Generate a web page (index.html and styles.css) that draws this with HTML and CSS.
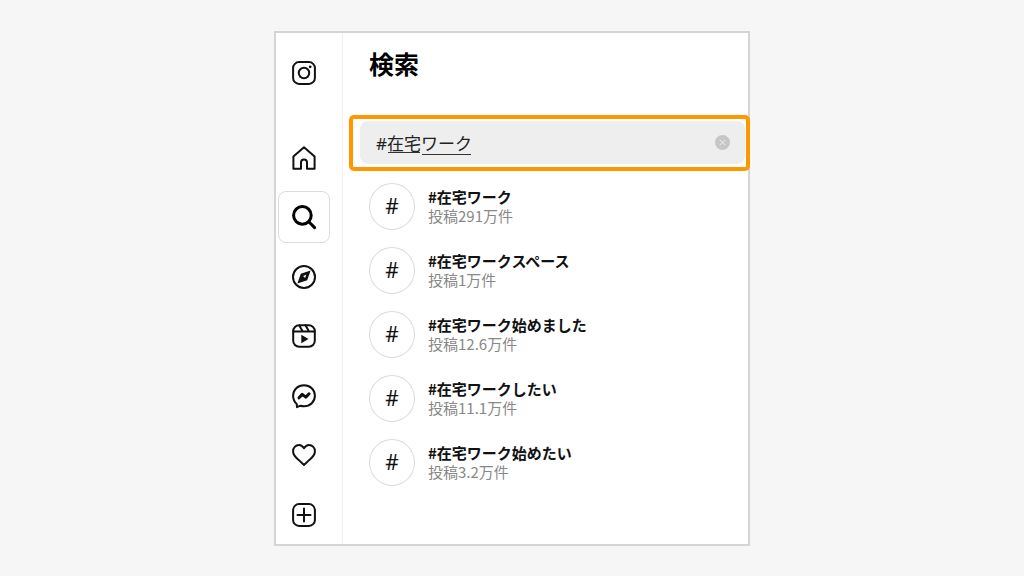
FILE: index.html
```
<!DOCTYPE html>
<html lang="ja">
<head>
    <meta charset="UTF-8">
    <meta name="viewport" content="width=device-width, initial-scale=1.0">
    <title>検索</title>
    <link rel="stylesheet" href="styles.css">
</head>
<body>
    <div class="panel">
        <aside class="sidebar">
            <a href="#" class="nav-item" aria-label="Instagram">
                <svg class="icon" viewBox="0 0 24 24">
                    <rect x="1.1" y="1.1" width="21.8" height="21.8" rx="6"/>
                    <circle cx="12" cy="12" r="5.2"/>
                    <circle cx="18.2" cy="5.8" r="1.4" class="solid"/>
                </svg>
            </a>
            <nav class="nav">
                <a href="#" class="nav-item" aria-label="ホーム">
                    <svg class="icon" viewBox="0 0 24 24">
                        <path d="M9 22.8V16.500a3 3 0 0 1 6 0v6.300h7.600V10.500L12 1.200 1.400 10.500v12.300z"/>
                    </svg>
                </a>
                <a href="#" class="nav-item active" aria-label="検索">
                    <svg class="icon bold" viewBox="0 0 24 24">
                        <circle cx="10.4" cy="10.4" r="8.8"/>
                        <path d="M16.8 16.8l5.8 5.8"/>
                    </svg>
                </a>
                <a href="#" class="nav-item" aria-label="発見">
                    <svg class="icon" viewBox="0 0 24 24">
                        <circle cx="12" cy="12" r="11"/>
                        <path class="solid" fill-rule="evenodd" d="M18.600 5.400l-3.400 9.800-9.800 3.400 3.400-9.800zM14.300 9.700l-3.200 1.200 2 2z"/>
                    </svg>
                </a>
                <a href="#" class="nav-item" aria-label="リール">
                    <svg class="icon" viewBox="0 0 24 24">
                        <rect x="1.2" y="1.2" width="21.6" height="21.6" rx="6"/>
                        <path d="M1.4 7.4h21.2M7.3 1.6l3.3 5.6M13.5 1.2l3.4 6"/>
                        <path class="solid" d="M9.300 10.800l7.200 4.200-7.200 4.200z"/>
                    </svg>
                </a>
                <a href="#" class="nav-item" aria-label="メッセージ">
                    <svg class="icon" viewBox="0 0 24 24">
                        <path d="M12 1.200c6.200 0 10.900 4.500 10.900 10.500S18.200 22.200 12 22.200c-1.300 0-2.500-.2-3.600-.5L5 23.100l-.3-3.200C2.500 17.900 1.100 15.100 1.100 11.700 1.100 5.700 5.800 1.200 12 1.200z"/>
                        <path class="wave" d="M7 13.800l3.200-3.400 3.600 2.700 3.300-3.300"/>
                    </svg>
                </a>
                <a href="#" class="nav-item" aria-label="お知らせ">
                    <svg class="icon" viewBox="0 0 24 24">
                        <path d="M16.8 2a6 6 0 0 1 6.100 6.500c0 4.200-3.100 6.200-5.800 8.600L12 22l-5.100-4.900c-2.700-2.400-5.800-4.400-5.800-8.600A6 6 0 0 1 7.200 2C10 2 11.200 4.100 12 5.300 12.800 4.100 14 2 16.800 2z"/>
                    </svg>
                </a>
                <a href="#" class="nav-item" aria-label="作成">
                    <svg class="icon" viewBox="0 0 24 24">
                        <rect x="1.1" y="1.1" width="21.8" height="21.8" rx="6"/>
                        <path d="M5.5 12h13M12 5.5v13"/>
                    </svg>
                </a>
            </nav>
        </aside>

        <main class="content">
            <h1>検索</h1>

            <div class="highlight">
                <div class="search">
                    <input type="text" id="search-input" aria-label="検索" value="#在宅ワーク">
                    <!-- IME composition underlines -->
                    <div class="composing">
                        <span class="clause"></span>
                        <span class="clause current"></span>
                    </div>
                    <button type="button" class="clear" aria-label="クリア">
                        <svg viewBox="0 0 14 14"><path d="M4.5 4.5l5 5M9.5 4.5l-5 5"/></svg>
                    </button>
                </div>
            </div>

            <ul class="results">
                <li>
                    <a href="#" class="result">
                        <span class="hash">#</span>
                        <span class="text">
                            <span class="name">#在宅ワーク</span>
                            <span class="count">投稿291万件</span>
                        </span>
                    </a>
                </li>
                <li>
                    <a href="#" class="result">
                        <span class="hash">#</span>
                        <span class="text">
                            <span class="name">#在宅ワークスペース</span>
                            <span class="count">投稿1万件</span>
                        </span>
                    </a>
                </li>
                <li>
                    <a href="#" class="result">
                        <span class="hash">#</span>
                        <span class="text">
                            <span class="name">#在宅ワーク始めました</span>
                            <span class="count">投稿12.6万件</span>
                        </span>
                    </a>
                </li>
                <li>
                    <a href="#" class="result">
                        <span class="hash">#</span>
                        <span class="text">
                            <span class="name">#在宅ワークしたい</span>
                            <span class="count">投稿11.1万件</span>
                        </span>
                    </a>
                </li>
                <li>
                    <a href="#" class="result">
                        <span class="hash">#</span>
                        <span class="text">
                            <span class="name">#在宅ワーク始めたい</span>
                            <span class="count">投稿3.2万件</span>
                        </span>
                    </a>
                </li>
            </ul>
        </main>
    </div>
</body>
</html>
```

FILE: styles.css
```
* {
    box-sizing: border-box;
}

body {
    margin: 0;
    min-height: 100vh;
    display: flex;
    justify-content: center;
    align-items: center;
    background-color: #f6f6f6;
    color: #111;
    font-family: "Noto Sans CJK JP", sans-serif;
}

a {
    color: inherit;
    text-decoration: none;
}

.panel {
    display: flex;
    width: 100%;
    max-width: 476px;
    background-color: #fff;
    border: 2px solid #d6d5d3;
}

/* Sidebar */
.sidebar {
    display: flex;
    flex-direction: column;
    gap: 33px;
    padding: 14px 12px 3px 2px;
    border-right: 1px solid #f0f0f0;
}

.nav {
    flex: 1;
    display: flex;
    flex-direction: column;
    justify-content: space-between;
}

.nav-item {
    display: flex;
    justify-content: center;
    align-items: center;
    width: 52px;
    height: 52px;
    border: 1px solid transparent;
    border-radius: 8px;
}

.nav-item.active {
    border-color: #dcdcdc;
}

.icon {
    width: 24px;
    height: 24px;
    overflow: visible;
    fill: none;
    stroke: #111;
    stroke-width: 2;
    stroke-linejoin: round;
    stroke-linecap: round;
}

.icon.bold {
    stroke: #000;
    stroke-width: 3;
}

.icon .solid {
    fill: #111;
    stroke: none;
}

.icon .wave {
    stroke-width: 3;
}

/* Search panel */
.content {
    flex: 1;
    padding: 12px 0 58px;
}

h1 {
    margin: 0 26px 34px;
    color: #000;
    font-size: 25px;
    line-height: 36px;
}

.highlight {
    margin: 0 -2px 0 6px;
    padding: 2px 1px 3px 7px;
    border: 4px solid #ff9800;
    border-radius: 5px;
}

.search {
    position: relative;
    display: flex;
    align-items: center;
    padding-right: 15px;
    background-color: #eee;
    border-radius: 8px;
    font-family: "Noto Sans", "Noto Sans CJK JP", sans-serif;
    font-size: 17px;
}

.search input {
    flex: 1;
    min-width: 0;
    height: 43px;
    padding: 0 0 0 16px;
    border: none;
    outline: none;
    background: none;
    color: #222;
    font: inherit;
}

.composing {
    position: absolute;
    left: 28px;
    bottom: 9px;
    display: flex;
    gap: 2px;
    pointer-events: none;
}

.clause {
    width: 32px;
    height: 3px;
    border-top: 1px solid #333;
}

.clause.current {
    width: 49px;
    border-top: none;
    border-bottom: 1px solid #333;
}

.clear {
    display: flex;
    width: 15px;
    height: 15px;
    padding: 0;
    border: none;
    border-radius: 50%;
    background-color: #c6c6c6;
    cursor: pointer;
}

.clear svg {
    width: 100%;
    fill: none;
    stroke: #e4e4e4;
    stroke-width: 1;
}

/* Result list */
.results {
    display: flex;
    flex-direction: column;
    gap: 17px;
    margin: 0;
    padding: 12px 26px 0;
    list-style: none;
}

.result {
    display: flex;
    align-items: center;
    gap: 13px;
}

.hash {
    display: flex;
    justify-content: center;
    align-items: center;
    width: 46px;
    height: 47px;
    border: 1px solid #dcdcdc;
    border-radius: 50%;
    font-family: "Noto Sans", sans-serif;
    font-size: 21px;
}

.text {
    display: flex;
    flex-direction: column;
    font-size: 15px;
    line-height: 19px;
}

.name {
    font-weight: bold;
}

.count {
    color: #888;
}
```
